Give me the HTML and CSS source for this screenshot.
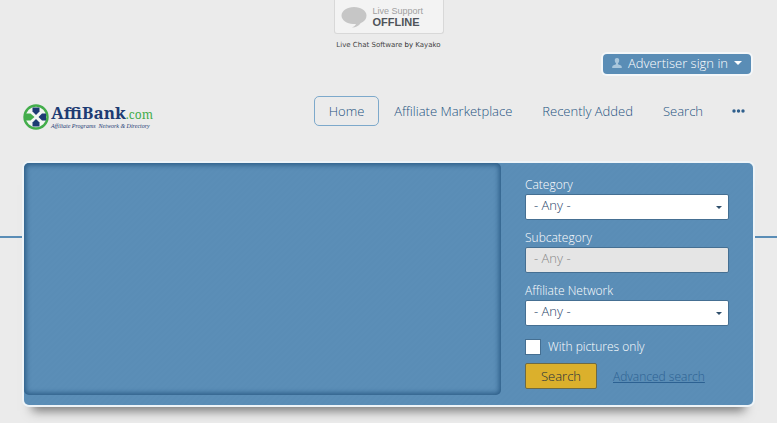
FILE: index.html
```
<!DOCTYPE html>
<html lang="en">
<head>
  <meta charset="UTF-8">
  <title>AffiBank.com</title>
  <link rel="stylesheet" href="styles.css">
</head>
<body>
  <div class="live-chat">
    <a href="#" class="chat-badge">
      <svg class="bubble" viewBox="0 0 26 22" width="26" height="22" aria-hidden="true">
        <path d="M13 1C6 1 .5 4.800.5 9.500S6 18 12 18l3 0c-.5 1.500-2 2.500-4 3.500 4 0 7-2 8.500-4.300C23.500 15.700 25.500 13 25.500 9.500 25.500 4.800 20 1 13 1z" fill="#c6c6c6"/>
      </svg>
      <span class="chat-text">Live Support<strong>OFFLINE</strong></span>
    </a>
    <div class="chat-credit"><a href="#">Live Chat Software</a> by <a href="#">Kayako</a></div>
  </div>

  <div class="account">
    <button type="button" class="sign-in">
      <svg viewBox="0 0 10 10" width="10" height="10" aria-hidden="true">
        <path d="M5 0C3.300 0 2.600 1.200 2.800 2.800c.1 1.200.6 1.900 1.200 2.400v1L1 7.500C.3 7.900.2 8.800.2 10h9.600c0-1.200-.1-2.100-.8-2.500L6 6.200v-1c.6-.5 1.100-1.200 1.200-2.400C7.400 1.200 6.700 0 5 0z" fill="#a9c6dc"/>
      </svg>
      Advertiser sign in
      <span class="caret"></span>
    </button>
  </div>

  <header class="header">
    <a href="#" class="logo" aria-label="AffiBank.com">
      <svg viewBox="0 0 136 32" width="136" height="32">
        <circle cx="13" cy="18" r="11.500" fill="#f2f6f2" stroke="#43ad4b" stroke-width="2.400"/>
        <path d="M9.500 8.500h7v4L13 16l-3.500-3.500z" fill="#1d3b73"/>
        <path d="M9.500 27.500h7v-4L13 20l-3.500 3.500z" fill="#1d3b73"/>
        <path d="M23 14.500v7h-4L15.500 18l3.500-3.500z" fill="#1d3b73"/>
        <path d="M1 14.500h6.500L11.500 18l-4 3.500H1z" fill="#43ad4b"/>
        <text x="28" y="20" class="logo-name">AffiBank<tspan class="logo-tld">.com</tspan></text>
        <text x="28" y="29" class="logo-tag">Affiliate Programs&#160; Network &amp; Directory</text>
      </svg>
    </a>
    <nav class="nav">
      <a href="#" class="active">Home</a>
      <a href="#">Affiliate Marketplace</a>
      <a href="#">Recently Added</a>
      <a href="#">Search</a>
      <button type="button" class="more" aria-label="More">
        <svg viewBox="0 0 13 4" width="13" height="4" aria-hidden="true">
          <g fill="#2f5f8c"><circle cx="2" cy="2" r="1.700"/><circle cx="6.500" cy="2" r="1.700"/><circle cx="11" cy="2" r="1.700"/></g>
        </svg>
      </button>
    </nav>
  </header>

  <main class="stage">
    <div class="panel">
      <div class="slideshow"></div>
      <form class="search-form">
        <label for="category">Category</label>
        <select id="category"><option>- Any -</option></select>
        <label for="subcategory">Subcategory</label>
        <select id="subcategory" disabled><option>- Any -</option></select>
        <label for="network">Affiliate Network</label>
        <select id="network"><option>- Any -</option></select>
        <div class="check-row">
          <input type="checkbox" id="pictures">
          <label for="pictures">With pictures only</label>
        </div>
        <div class="actions">
          <button type="submit" class="search-btn">Search</button>
          <a href="#">Advanced search</a>
        </div>
      </form>
    </div>
  </main>
</body>
</html>
```

FILE: styles.css
```
* {
  box-sizing: border-box;
}
body {
  margin: 0;
  background-color: #ebebeb;
  font-family: "Open Sans", "Noto Sans", sans-serif;
  font-size: 13px;
  font-weight: 300;
  color: #245280;
}
button,
select {
  font: inherit;
}
.live-chat {
  display: flex;
  flex-direction: column;
  align-items: center;
}
.chat-badge {
  display: flex;
  align-items: center;
  gap: 6px;
  width: 110px;
  height: 34px;
  padding: 0 6px;
  border: 1px solid #d8d8d8;
  border-top: 0;
  border-radius: 0 0 3px 3px;
  background-color: #f3f3f3;
  text-decoration: none;
}
.chat-text {
  font: 9px/11px "Liberation Sans", sans-serif;
  color: #a0a0a0;
  white-space: nowrap;
}
.chat-text strong {
  display: block;
  font-size: 11px;
  color: #4f5459;
}
.chat-credit {
  margin-top: 6px;
  font: 7px/10px "DejaVu Sans", sans-serif;
  color: #222;
}
.chat-credit a {
  color: #444;
  text-decoration: none;
}
.account {
  display: flex;
  justify-content: flex-end;
  padding: 4px 26px 0;
}
.sign-in {
  display: flex;
  align-items: center;
  gap: 6px;
  height: 20px;
  padding: 0 9px 2px;
  border: 0;
  border-radius: 4px;
  background-color: #5a8db6;
  box-shadow: 0 0 0 2px #f4f7f9;
  color: #fff;
  cursor: pointer;
}
.caret {
  border: 4px solid transparent;
  border-top-color: #fff;
  border-bottom: 0;
}
.header {
  display: flex;
  align-items: center;
  justify-content: space-between;
  padding: 16px 24px 0 23px;
}
.logo {
  display: flex;
  margin-top: 9px;
}
.logo-name {
  font: bold 17px "Noto Serif", "Liberation Serif", serif;
  fill: #1d3b73;
}
.logo-tld {
  font-weight: normal;
  font-size: 12px;
  fill: #43ad4b;
}
.logo-tag {
  font: italic 6px "Liberation Serif", serif;
  fill: #1d3b73;
}
.nav {
  display: flex;
  align-items: center;
}
.nav a {
  padding: 0 14px;
  border: 1px solid transparent;
  border-radius: 5px;
  line-height: 28px;
  color: #245280;
  text-decoration: none;
  white-space: nowrap;
}
.nav a.active {
  border-color: #7da9cb;
}
.more {
  display: flex;
  margin-left: 6px;
  padding: 8px;
  border: 0;
  background: none;
  cursor: pointer;
}
.stage {
  padding: 32px 24px 18px;
  background: linear-gradient(#5a8db6, #5a8db6) 0 105px / 100% 2px no-repeat;
}
.panel {
  display: grid;
  grid-template-columns: 1fr 204px;
  column-gap: 24px;
  padding-right: 24px;
  border-radius: 5px;
  background: repeating-linear-gradient(135deg, #5a8db6 0 2px, #5b8eb7 2px 4px);
  box-shadow: 0 0 0 2px #eef4f8, 0 14px 10px -8px #777;
}
.slideshow {
  margin-bottom: 10px;
  border-radius: 5px;
  box-shadow: inset 0 0 5px 2px #2c5d87;
}
.search-form {
  padding: 13px 0 16px;
}
.search-form label {
  display: block;
  font-size: 12px;
  line-height: 18px;
  color: #fff;
}
.search-form select {
  display: block;
  width: 100%;
  height: 26px;
  margin-bottom: 9px;
  padding: 0 8px 4px;
  border: 1px solid #456f92;
  border-radius: 2px;
  appearance: none;
  background: #fff url("data:image/svg+xml,%3Csvg xmlns='http://www.w3.org/2000/svg' width='6' height='3'%3E%3Cpath d='M0 0h6L3 3z' fill='%232f4f6c'/%3E%3C/svg%3E") right 6px center no-repeat;
  color: #1f4468;
}
.search-form select:disabled {
  background: #e5e5e5;
  color: #888;
  opacity: 1;
}
.check-row {
  display: flex;
  align-items: center;
  gap: 7px;
  padding-top: 3px;
}
.check-row input {
  width: 16px;
  height: 16px;
  margin: 0;
  border: 1px solid #456f92;
  appearance: none;
  background-color: #fff;
}
.check-row input:checked {
  box-shadow: inset 0 0 0 3px #fff;
  background-color: #2f5f8c;
}
.actions {
  display: flex;
  align-items: center;
  gap: 16px;
  margin-top: 7px;
}
.search-btn {
  width: 72px;
  height: 26px;
  padding: 0;
  border: 1px solid #6d6a45;
  border-radius: 2px;
  background-color: #dbb02c;
  color: #1b2f3d;
  cursor: pointer;
}
.actions a {
  font-size: 12px;
  color: #2c6192;
}
```
